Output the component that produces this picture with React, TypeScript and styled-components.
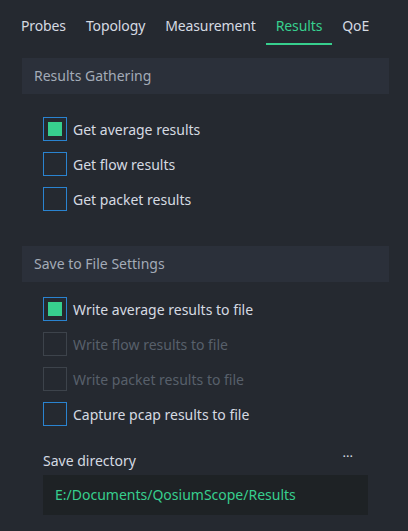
import React from "react";
import styled, { createGlobalStyle } from "styled-components";

const GlobalStyle = createGlobalStyle`
  html, body {
    margin: 0;
    padding: 0;
    background: #252930;
  }
  body {
    font-family: "Noto Sans", "Open Sans", sans-serif;
    font-size: 14px;
  }
`;

const Page = styled.div`
  width: 408px;
  height: 531px;
  background: #252930;
  overflow: hidden;
`;

const TabBar = styled.div`
  display: flex;
  padding: 12px 0 0 11px;
  margin-bottom: 13px;
`;

const Tab = styled.div<{ $active?: boolean }>`
  padding: 0 10px;
  height: 31px;
  line-height: 28px;
  font-size: 14px;
  letter-spacing: -0.12px;
  color: ${(p) => (p.$active ? "#37cf8e" : "#d5dae2")};
  border-bottom: 2px solid ${(p) => (p.$active ? "#37cf8e" : "transparent")};
`;

const Section = styled.div<{ $gap?: number }>`
  padding: 0 19px 0 22px;
  margin-top: ${(p) => p.$gap ?? 0}px;
`;

const SectionHeader = styled.div`
  height: 36px;
  background: #2b303a;
  color: #a3abb7;
  font-size: 14px;
  line-height: 36px;
  padding-left: 12px;
`;

const List = styled.div<{ $top: number }>`
  display: flex;
  flex-direction: column;
  gap: 11px;
  padding: ${(p) => p.$top}px 0 0 21px;
`;

const Row = styled.label`
  display: flex;
  align-items: center;
  gap: 6px;
  height: 24px;
`;

const Box = styled.span<{ $disabled?: boolean }>`
  width: 22px;
  height: 22px;
  border: 1px solid ${(p) => (p.$disabled ? "#3d434b" : "#2a83d0")};
  display: flex;
  align-items: center;
  justify-content: center;
  flex-shrink: 0;
`;

const Fill = styled.span`
  width: 14px;
  height: 14px;
  background: #37cf8e;
`;

const RowText = styled.span<{ $disabled?: boolean }>`
  font-size: 14px;
  color: ${(p) => (p.$disabled ? "#58606b" : "#d5dae2")};
`;

const DirBlock = styled.div`
  padding: 22px 21px 0 21px;
`;

const DirHead = styled.div`
  display: flex;
  justify-content: space-between;
  align-items: center;
  height: 24px;
  padding-right: 15px;
`;

const DirLabel = styled.span`
  color: #d5dae2;
  font-size: 14px;
`;

const Dots = styled.span`
  color: #d5dae2;
  font-size: 13px;
  margin-top: -8px;
`;

const PathBox = styled.div`
  margin-top: 3px;
  height: 40px;
  background: #1e2225;
  color: #37cf8e;
  font-size: 14px;
  line-height: 40px;
  padding-left: 12px;
`;

type Item = { label: string; checked?: boolean; disabled?: boolean };

const gather: Item[] = [
  { label: "Get average results", checked: true },
  { label: "Get flow results" },
  { label: "Get packet results" },
];

const save: Item[] = [
  { label: "Write average results to file", checked: true },
  { label: "Write flow results to file", disabled: true },
  { label: "Write packet results to file", disabled: true },
  { label: "Capture pcap results to file" },
];

function Checks({ items, top }: { items: Item[]; top: number }) {
  return (
    <List $top={top}>
      {items.map((it) => (
        <Row key={it.label}>
          <Box $disabled={it.disabled}>{it.checked && <Fill />}</Box>
          <RowText $disabled={it.disabled}>{it.label}</RowText>
        </Row>
      ))}
    </List>
  );
}

export default function App() {
  const tabs = ["Probes", "Topology", "Measurement", "Results", "QoE"];
  return (
    <Page>
      <GlobalStyle />
      <TabBar>
        {tabs.map((t) => (
          <Tab key={t} $active={t === "Results"}>
            {t}
          </Tab>
        ))}
      </TabBar>
      <Section>
        <SectionHeader>Results Gathering</SectionHeader>
        <Checks items={gather} top={23} />
      </Section>
      <Section $gap={35}>
        <SectionHeader>Save to File Settings</SectionHeader>
        <Checks items={save} top={15} />
        <DirBlock>
          <DirHead>
            <DirLabel>Save directory</DirLabel>
            <Dots>···</Dots>
          </DirHead>
          <PathBox>E:/Documents/QosiumScope/Results</PathBox>
        </DirBlock>
      </Section>
    </Page>
  );
}
